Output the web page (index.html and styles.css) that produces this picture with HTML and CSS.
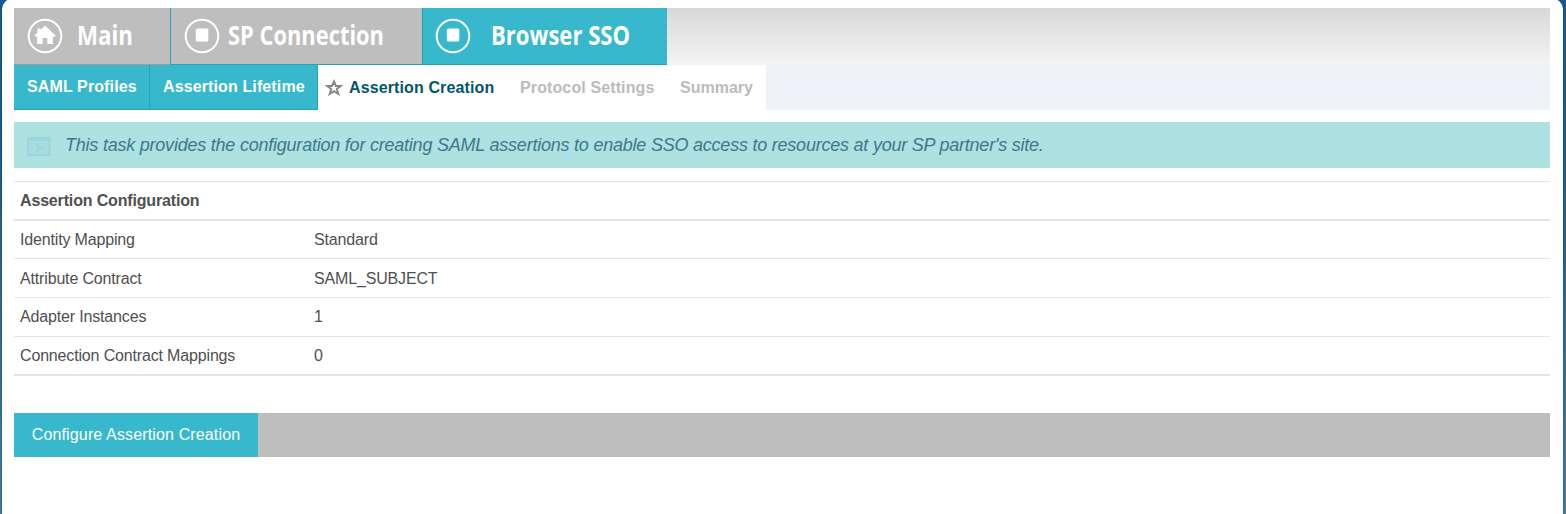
FILE: index.html
```html
<!DOCTYPE html>
<html lang="en">
<head>
<meta charset="utf-8">
<title>Browser SSO</title>
<link rel="stylesheet" href="styles.css">
</head>
<body>
<main class="panel">
  <nav class="tabs">
    <a class="tab tab-main">
      <svg class="ring" viewBox="0 0 36 36"><circle cx="18" cy="18" r="16.300"/><path d="M18 7.500 28.500 17.500v1h-2.500v7.500H20.300V20h-4.600v6H10V18.500H7.500v-1l3-3v-4h3v1.300z"/></svg>
      <svg class="label" width="64" height="44"><text x="0" y="28" textLength="56" lengthAdjust="spacingAndGlyphs">Main</text></svg>
    </a>
    <a class="tab tab-sp">
      <svg class="ring" viewBox="0 0 36 36"><circle cx="18" cy="18" r="16.300"/><rect x="11.800" y="10.500" width="12.500" height="13" rx="1.500"/></svg>
      <svg class="label" width="166" height="44"><text x="0" y="28" textLength="156" lengthAdjust="spacingAndGlyphs">SP Connection</text></svg>
    </a>
    <a class="tab tab-sso">
      <svg class="ring" viewBox="0 0 36 36"><circle cx="18" cy="18" r="16.300"/><rect x="11.800" y="10.500" width="12.500" height="13" rx="1.500"/></svg>
      <svg class="label" width="150" height="44"><text x="0" y="28" textLength="139" lengthAdjust="spacingAndGlyphs">Browser SSO</text></svg>
    </a>
  </nav>
  <nav class="steps">
    <a class="step done profiles">SAML Profiles</a>
    <a class="step done lifetime">Assertion Lifetime</a>
    <div class="pending">
      <svg class="star" viewBox="0 0 18 18"><path d="M9 2.500 10.900 7h4.700l-3.800 3 1.500 5L9 12.200 4.700 15l1.500-5-3.800-3h4.700z"/></svg>
      <a class="current">Assertion Creation</a>
      <a class="settings">Protocol Settings</a>
      <a class="summary">Summary</a>
    </div>
  </nav>
  <div class="notice">
    <svg class="notice-icon" viewBox="0 0 24 20"><path class="frame" d="M1 1h21.500v17H1z"/><path class="bar" d="M1 2.500h21.500"/><path class="chevron" d="M9 6.500q1.500 3.500 5 5-3.500 1-5 4"/></svg>
    <em>This task provides the configuration for creating SAML assertions to enable SSO access to resources at your SP partner's site.</em>
  </div>
  <table class="config">
    <thead><tr><th colspan="2">Assertion Configuration</th></tr></thead>
    <tbody>
      <tr class="first"><td class="key">Identity Mapping</td><td>Standard</td></tr>
      <tr class="second"><td class="key">Attribute Contract</td><td>SAML_SUBJECT</td></tr>
      <tr><td class="key">Adapter Instances</td><td>1</td></tr>
      <tr class="last"><td class="key">Connection Contract Mappings</td><td>0</td></tr>
    </tbody>
  </table>
  <div class="actions"><button class="configure">Configure Assertion Creation</button></div>
</main>
</body>
</html>
```
FILE: styles.css
```css
* { box-sizing: border-box; }
body {
  margin: 0;
  height: 514px;
  overflow: hidden;
  padding: 0 3px 0 2px;
  background: linear-gradient(#145a97, #1d5e91 35%, #4b7c9f);
  font: 16px "Liberation Sans", Arial, sans-serif;
  color: #4f4f4f;
}
.panel {
  height: 524px;
  margin-top: -1px;
  padding: 9px 13px 0 12px;
  background: #fff;
  border-radius: 10px 10px 0 0;
  box-shadow: 0 0 2px #0b3b61;
}
.tabs {
  display: flex;
  height: 57px;
  background: linear-gradient(#d8d8d8, #f4f4f4);
}
.tab {
  display: flex;
  align-items: flex-start;
  height: 57px;
  padding-top: 9px;
  background: #bebebe;
  border-bottom: 1px solid #26a4b7;
}
.tab-main { width: 156px; padding-left: 13px; border-bottom-color: #9e9e9e; }
.tab-sp { width: 252px; padding-left: 13px; border-left: 1px solid #26a4b7; }
.tab-sso { width: 245px; padding-left: 12px; background: #37b8cd; border-left: 1px solid #26a4b7; }
.ring { width: 36px; height: 36px; margin-top: 1px; flex: none; }
.ring circle { fill: none; stroke: #fff; stroke-width: 2; }
.ring path, .ring rect { fill: #fff; }
.label { flex: none; overflow: visible; }
.tab-main .label { margin-left: 14px; }
.tab-sp .label { margin-left: 8px; }
.tab-sso .label { margin-left: 20px; }
.label text { font: 700 26.500px "Open Sans", sans-serif; fill: #fff; }
.steps {
  display: flex;
  height: 45px;
  background: #eff3f8;
  font-weight: bold;
  letter-spacing: 0.120px;
}
.step {
  padding: 13px 0 0 13px;
  line-height: 18px;
  color: #fff;
  background: #37b8cd;
  border: solid #26a4b7;
  border-width: 0 1px 1px 0;
  white-space: nowrap;
}
.profiles { width: 136px; }
.lifetime { width: 168px; }
.pending {
  display: flex;
  width: 448px;
  padding: 14px 0 0 7px;
  line-height: 18px;
  background: #fff;
  color: #bbb;
  white-space: nowrap;
}
.star { width: 18px; height: 18px; margin: 0 6px 0 0; flex: none; }
.star path { fill: none; stroke: #85898b; stroke-width: 2; }
.current { width: 171px; color: #02566b; }
.settings { width: 160px; }
.summary { letter-spacing: 0; }
.notice {
  display: flex;
  height: 46px;
  margin-top: 12px;
  padding: 13px 0 0 13px;
  background: #ade1e2;
  color: #3d788b;
  font-size: 18px;
  line-height: 20px;
  letter-spacing: -0.225px;
  white-space: nowrap;
}
.notice-icon { width: 24px; height: 20px; margin: 2px 14px 0 0; flex: none; }
.notice-icon path { fill: none; stroke: #9bd6df; stroke-width: 2; }
.notice-icon .frame { fill: #a6dde1; }
.notice-icon .bar { stroke-width: 3; }
.notice-icon .chevron { stroke-width: 2.500; }
.config {
  width: 100%;
  margin-top: 13px;
  border-spacing: 0;
  border-top: 1px solid #e5e5e5;
  letter-spacing: -0.160px;
}
.config th, .config td { padding: 0 6px; text-align: left; }
.config th { height: 39px; color: #505050; border-bottom: 2px solid #e5e5e5; }
.config td { height: 39px; border-bottom: 1px solid #e5e5e5; }
.config .first td { height: 38px; }
.config .second td { padding-top: 2px; }
.config .key { width: 294px; }
.config .last td { border-bottom-width: 2px; padding-top: 1px; }
.actions { height: 44px; margin-top: 37px; background: #bebebe; }
.configure {
  width: 244px;
  height: 44px;
  padding: 0;
  border: 0;
  background: #37b8cd;
  color: #fff;
  font: inherit;
  letter-spacing: 0.140px;
}
```
